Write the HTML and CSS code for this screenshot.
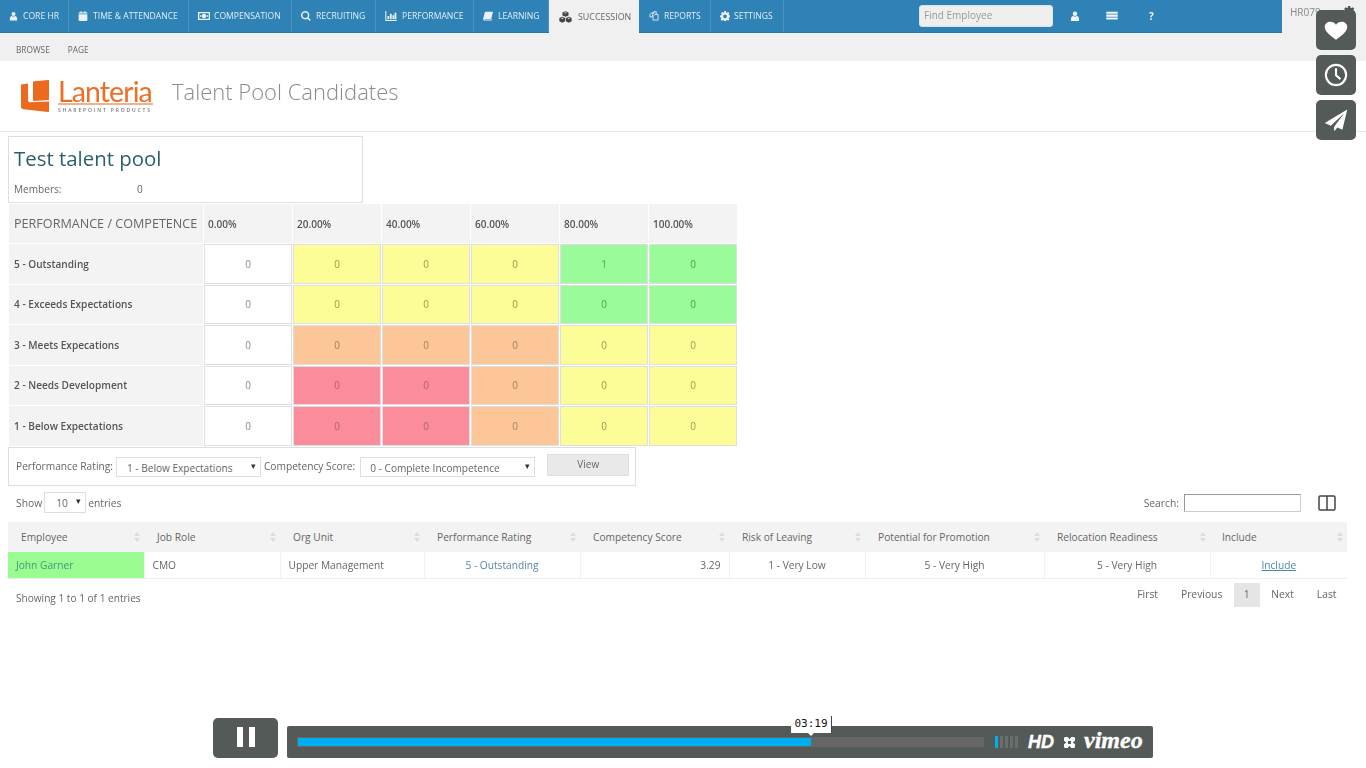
FILE: index.html
```html
<!DOCTYPE html>
<html lang="en">
<head>
<meta charset="utf-8">
<title>Talent Pool Candidates</title>
<link rel="stylesheet" href="styles.css">
</head>
<body>
<svg class="defs" width="0" height="0" aria-hidden="true">
  <symbol id="i-user" viewBox="0 0 16 16"><circle cx="8" cy="4.4" r="3.6"/><path d="M1.5 15v-2.6C1.5 9.8 3.4 8 5.2 8c.8.6 1.7.9 2.8.9s2-.3 2.8-.9c1.8 0 3.7 1.8 3.7 4.4V15c0 .5-.5 1-1 1h-11c-.5 0-1-.5-1-1z"/></symbol>
  <symbol id="i-cal" viewBox="0 0 16 16"><path d="M1 5h14v9.5c0 .8-.7 1.5-1.5 1.5h-11C1.700 16 1 15.300 1 14.500zM2.500 2H4V.5h2V2h4V.5h2V2h1.500c.8 0 1.500.7 1.500 1.500V4H1v-.5C1 2.700 1.700 2 2.500 2z"/></symbol>
  <symbol id="i-money" viewBox="0 0 18 14"><path fill-rule="evenodd" d="M0 1h18v12H0zM2 3v8h14V3zM9 3.500a3.500 3.500 0 1 1 0 7 3.500 3.500 0 0 1 0-7zM3 6h2v2H3zM13 6h2v2h-2z"/></symbol>
  <symbol id="i-search" viewBox="0 0 16 16"><path fill-rule="evenodd" d="M6.700 0a6.700 6.700 0 0 1 5.400 10.600l3.500 3.500-1.700 1.700-3.500-3.500A6.700 6.700 0 1 1 6.700 0zm0 2.400a4.300 4.300 0 1 0 0 8.600 4.300 4.300 0 0 0 0-8.600z"/></symbol>
  <symbol id="i-chart" viewBox="0 0 16 14"><path d="M0 0h1.500v12.500H16V14H0zM3 7h2.500v4.500H3zM6.500 4H9v7.500H6.500zM10 6h2.500v5.500H10zM13 2.500h2.500v9H13z"/></symbol>
  <symbol id="i-book" viewBox="0 0 16 14"><path d="M4.500 0H15c.7 0 1 .5.800 1.200l-2.300 9.300c-.2.800-.8 1.200-1.500 1.200H3c-.7 0-1 .8-.2.8h10.500c.5 0 .8-.3 1-.8l.5.500c-.2.8-.8 1.800-1.800 1.800H2C.6 14 0 12.800 .3 11.500L2.800 1.300C3 .5 3.700 0 4.500 0z"/></symbol>
  <symbol id="i-cubes" viewBox="0 0 18 16"><path fill-rule="evenodd" d="M9 0l4.200 1.700v4.200L9 7.600 4.800 5.900V1.700zM9 1.500 7 2.300 9 3.100l2-.8zM4.500 7.700l4 1.700v4.500l-4 1.900-4-1.900V9.400zM4.500 9.100l-2 .8 2 .8 2-.8zM13.500 7.700l4 1.700v4.500l-4 1.900-4-1.900V9.400zM13.500 9.100l-2 .8 2 .8 2-.8z"/></symbol>
  <symbol id="i-copy" viewBox="0 0 16 16"><path fill="none" stroke="currentColor" stroke-width="1.400" d="M5.500 3.500 8 1h3.500v4M8 1v3H5.500v5.500h-4V5.500L5.500 1.500M9.500 5.500h5v9h-8V9z"/></symbol>
  <symbol id="i-cog" viewBox="0 0 16 16"><path fill-rule="evenodd" d="M6.500 0h3l.4 2.200 1.300.6L13 1.500l2 2.100-1.200 1.800.6 1.300 2.200.4v2.900l-2.200.4-.6 1.300 1.300 1.800-2.100 2.100-1.800-1.300-1.300.5-.4 2.200h-3l-.4-2.200-1.300-.5-1.800 1.300-2.100-2.100 1.300-1.800-.6-1.300L0 9.900V7l2.200-.4.600-1.300L1.500 3.500l2.100-2 1.800 1.300 1.300-.6zM8 5.400a3 3 0 1 0 0 6 3 3 0 0 0 0-6z"/></symbol>
  <symbol id="i-list" viewBox="0 0 16 14"><path d="M0 1h16v3H0zM0 5h16v3H0zM0 9h16v3H0z"/></symbol>
</svg>

<header class="topbar">
  <nav class="tabs">
    <a class="tab"><svg class="ico ico-s"><use href="#i-user"/></svg>CORE HR</a>
    <a class="tab"><svg class="ico"><use href="#i-cal"/></svg>TIME &amp; ATTENDANCE</a>
    <a class="tab tab-tight"><svg class="ico ico-w"><use href="#i-money"/></svg>COMPENSATION</a>
    <a class="tab"><svg class="ico"><use href="#i-search"/></svg>RECRUITING</a>
    <a class="tab"><svg class="ico ico-w"><use href="#i-chart"/></svg>PERFORMANCE</a>
    <a class="tab"><svg class="ico"><use href="#i-book"/></svg>LEARNING</a>
    <a class="tab tab-active"><svg class="ico ico-c"><use href="#i-cubes"/></svg>SUCCESSION</a>
    <a class="tab tab-tight"><svg class="ico ico-w"><use href="#i-copy"/></svg>REPORTS</a>
    <a class="tab tab-tight"><svg class="ico"><use href="#i-cog"/></svg>SETTINGS</a>
    <div class="tab-tools">
      <div class="find">Find Employee</div>
      <svg class="tool tool-user"><use href="#i-user"/></svg>
      <svg class="tool tool-list"><use href="#i-list"/></svg>
      <span class="tool-q">?</span>
    </div>
  </nav>
  <div class="account">
    <span class="account-name">HR079 ▾</span>
    <svg class="account-cog"><use href="#i-cog"/></svg>
  </div>
</header>

<div class="subbar"><span>BROWSE</span><span>PAGE</span></div>

<div class="brandbar">
  <div class="logo">
    <svg class="logo-mark" viewBox="0 0 28 32"><path d="M0 4.500 7 3.500V20c0 1.500.8 2.300 2.200 2.200L28 21.500V31c0 .7-.5 1-1.200 1L2.500 29.300C1 29.100 0 28 0 26.500z"/><path d="M12 1.500 27 0c.7 0 1 .3 1 1V20L13 21c-.7 0-1-.3-1-1z"/></svg>
    <div class="logo-words">
      <span class="logo-name">Lanteria</span>
      <span class="logo-sub">SHAREPOINT PRODUCTS</span>
    </div>
  </div>
  <h1 class="page-title">Talent Pool Candidates</h1>
</div>

<main class="content">
  <section class="pool">
    <h2 class="pool-name">Test talent pool</h2>
    <div class="pool-meta"><span class="pool-label">Members:</span><span>0</span></div>
  </section>

  <section class="matrix">
    <div class="m-corner">PERFORMANCE / COMPETENCE</div>
    <div class="m-head">0.00%</div><div class="m-head">20.00%</div><div class="m-head">40.00%</div><div class="m-head">60.00%</div><div class="m-head">80.00%</div><div class="m-head">100.00%</div>

    <div class="m-row">5 - Outstanding</div>
    <div class="c c-w">0</div><div class="c c-y">0</div><div class="c c-y">0</div><div class="c c-y">0</div><div class="c c-g">1</div><div class="c c-g">0</div>

    <div class="m-row">4 - Exceeds Expectations</div>
    <div class="c c-w">0</div><div class="c c-y">0</div><div class="c c-y">0</div><div class="c c-y">0</div><div class="c c-g">0</div><div class="c c-g">0</div>

    <div class="m-row">3 - Meets Expecations</div>
    <div class="c c-w">0</div><div class="c c-o">0</div><div class="c c-o">0</div><div class="c c-o">0</div><div class="c c-y">0</div><div class="c c-y">0</div>

    <div class="m-row">2 - Needs Development</div>
    <div class="c c-w">0</div><div class="c c-r">0</div><div class="c c-r">0</div><div class="c c-o">0</div><div class="c c-y">0</div><div class="c c-y">0</div>

    <div class="m-row">1 - Below Expectations</div>
    <div class="c c-w">0</div><div class="c c-r">0</div><div class="c c-r">0</div><div class="c c-o">0</div><div class="c c-y">0</div><div class="c c-y">0</div>
  </section>

  <section class="filter">
    <span class="f-label">Performance Rating:</span>
    <div class="select sel-perf"><span>1 - Below Expectations</span><i>▾</i></div>
    <span class="f-label">Competency Score:</span>
    <div class="select sel-comp"><span>0 - Complete Incompetence</span><i>▾</i></div>
    <div class="view-btn">View</div>
  </section>

  <section class="tools">
    <div class="show">Show <div class="select sel-len"><span>10</span><i>▾</i></div> entries</div>
    <div class="search">Search: <div class="search-box"></div>
      <svg class="columns-ico" viewBox="0 0 18 16"><path fill="none" stroke="#444" stroke-width="1.500" d="M1 2.200c0-.7.500-1.200 1.200-1.200h13.600c.7 0 1.200.5 1.200 1.200v11.600c0 .7-.5 1.200-1.200 1.200H2.200c-.7 0-1.200-.5-1.200-1.200zM9 1v14"/></svg>
    </div>
  </section>

  <table class="grid">
    <colgroup><col class="w1"><col class="w2"><col class="w3"><col class="w4"><col class="w5"><col class="w6"><col class="w7"><col class="w8"><col class="w9"></colgroup>
    <thead>
      <tr>
        <th>Employee</th><th>Job Role</th><th>Org Unit</th><th>Performance Rating</th><th>Competency Score</th><th>Risk of Leaving</th><th>Potential for Promotion</th><th>Relocation Readiness</th><th>Include</th>
      </tr>
    </thead>
    <tbody>
      <tr>
        <td class="td-emp">John Garner</td>
        <td>CMO</td>
        <td>Upper Management</td>
        <td class="ctr td-link">5 - Outstanding</td>
        <td class="rgt">3.29</td>
        <td class="ctr">1 - Very Low</td>
        <td class="ctr">5 - Very High</td>
        <td class="ctr">5 - Very High</td>
        <td class="ctr"><a class="inc">Include</a></td>
      </tr>
    </tbody>
  </table>

  <section class="foot">
    <div class="info">Showing 1 to 1 of 1 entries</div>
    <div class="pager"><span>First</span><span>Previous</span><span class="pg-on">1</span><span>Next</span><span>Last</span></div>
  </section>
</main>

<aside class="float-btns">
  <div class="fb"><svg viewBox="0 0 32 28" preserveAspectRatio="none" class="fb-ico fb-heart"><path d="M16 27.500C12 24 1 16.500 1 8.700 1 4 4.500 1 8.500 1c3.200 0 6 1.600 7.500 4.500C17.500 2.600 20.300 1 23.500 1 27.500 1 31 4 31 8.700c0 7.800-11 15.300-15 18.800z"/></svg></div>
  <div class="fb"><svg viewBox="0 0 32 32" class="fb-ico fb-clock"><circle cx="16" cy="16" r="13.500"/><path d="M16 7v9.500l6 5"/></svg></div>
  <div class="fb"><svg viewBox="0 0 32 32" class="fb-ico"><path d="M31 2 1 20l8 3.500L27 7 13.500 25v6l4.500-5 6.500 3z"/></svg></div>
</aside>

<aside class="player">
  <div class="pause"><i></i><i></i></div>
  <div class="bar">
    <div class="track"><div class="fill"></div></div>
    <div class="vol"><i class="on"></i><i></i><i></i><i></i><i></i></div>
    <span class="hd">HD</span>
    <svg class="fs" viewBox="0 0 12 12"><path d="M0 1 1 0h3l2 2.500L8 0h3l1 1v3L9.500 6 12 8v3l-1 1H8L6 9.500 4 12H1l-1-1V8l2.500-2L0 4zM4.300 4.300v3.400h3.400V4.300z"/></svg>
    <span class="vm">vimeo</span>
    <div class="stamp">03:19</div>
  </div>
</aside>
</body>
</html>
```
FILE: styles.css
```css
* { box-sizing: border-box; }
html, body { margin: 0; padding: 0; }
body {
  position: relative;
  width: 1366px;
  height: 768px;
  overflow: hidden;
  background: #fff;
  font-family: "Open Sans", "Liberation Sans", sans-serif;
  font-size: 10.3px;
  color: #666;
}
.defs { position: absolute; }

/* the reference is a frame of a video: soft edges everywhere except the player chrome */
.topbar, .subbar, .brandbar, .content { filter: blur(.35px); }

/* top bar */
.topbar { display: flex; height: 33px; background: #f0f0f0; }
.tabs {
  display: grid;
  grid-template-columns: 69px 120px 103px 84px 98px 75px 90px 72px 73px 1fr;
  width: 1282px;
  background: #2f82b6;
  border-bottom: 1px solid #2a75a5;
}
.tab {
  display: flex;
  align-items: center;
  padding-left: 9px;
  gap: 5px;
  font-size: 8.6px;
  color: #e4eef5;
  border-right: 1px solid #4a93c0;
  white-space: nowrap;
}
.tab-tight { gap: 4px; }
.tab-active {
  background: #f0f0f0;
  color: #666;
  border-right: 0;
  margin-bottom: -1px;
  padding-left: 10px;
  gap: 6px;
  font-size: 8.9px;
}
.ico { width: 10px; height: 10px; flex: none; fill: #e9f1f7; color: #e9f1f7; }
.ico-s { width: 9px; }
.ico-w { width: 12px; }
.ico-c { width: 13px; height: 12px; fill: #444; }
.tab-tools { display: flex; align-items: center; }
.find {
  width: 134px;
  height: 22px;
  margin: 0 0 0 135px;
  padding: 2px 4px;
  background: #efefef;
  border-radius: 3px;
  border: 1px solid #d8e2e8;
  font-size: 10px;
  line-height: 14px;
  color: #999;
}
.tool { fill: #f1f6fa; flex: none; }
.tool-user { width: 10px; height: 10px; margin-left: 17px; }
.tool-list { width: 12px; height: 10px; margin-left: 26px; }
.tool-q { margin-left: 31px; font-size: 10px; font-weight: 700; color: #f1f6fa; }
.account { flex: 1; display: flex; padding: 5px 0 0 8px; font-size: 10px; color: #888; }
.account-name { width: 53px; line-height: 14px; white-space: nowrap; }
.account-cog { width: 12px; height: 12px; fill: #555; margin-top: 1px; }

.subbar {
  display: flex;
  gap: 18px;
  height: 27.5px;
  padding: 6px 0 0 16px;
  align-items: center;
  background: #f0f0f0;
  font-size: 8.3px;
  color: #666;
}

/* brand */
.brandbar {
  display: flex;
  align-items: center;
  height: 71.5px;
  padding-left: 21px;
  border-bottom: 1px solid #e8e8e8;
}
.logo { display: flex; gap: 9px; align-items: flex-start; width: 151px; height: 36px; margin-top: 3px; }
.logo-mark { width: 28px; height: 32px; fill: #ec6a1e; margin-top: 1px; flex: none; }
.logo-words { display: flex; flex-direction: column; }
.logo-name {
  font-family: "Lato", "Open Sans", sans-serif;
  font-weight: 400;
  font-size: 28.5px;
  line-height: 25px;
  color: #ec6f26;
  border-bottom: 2px solid #f3b08a;
  letter-spacing: -.9px;
  height: 26px;
  width: 95px;
}
.logo-sub { font-size: 5px; font-weight: 600; line-height: 7px; letter-spacing: 1.85px; color: #777; white-space: nowrap; margin-top: 2px; }
.page-title {
  margin: -10px 0 0;
  font-weight: 300;
  font-size: 22px;
  line-height: 30px;
  color: #8a8a8a;
}

/* content */
.content { padding: 4px 19px 0 8px; }
.pool {
  width: 355px;
  height: 67px;
  padding: 7px 5px;
  border: 1px solid #dedede;
}
.pool-name { margin: 0; font-size: 20.4px; font-weight: 400; line-height: 28px; color: #2c5f6d; }
.pool-meta { display: flex; margin-top: 10px; font-size: 10.1px; line-height: 14px; }
.pool-label { width: 123px; }

.matrix {
  display: grid;
  grid-template-columns: 194px repeat(6, 88px);
  grid-template-rows: 39px repeat(5, 39.5px);
  gap: 1px;
  margin: 1px 0 0 1px;
  width: max-content;
}
.m-corner, .m-head, .m-row { background: #f3f3f3; display: flex; align-items: center; padding-left: 5px; }
.m-corner { font-size: 12.6px; color: #666; white-space: nowrap; }
.m-head { padding-left: 4px; font-weight: 600; font-size: 10px; color: #555; }
.m-row { font-weight: 600; font-size: 10.1px; color: #555; }
.c { display: flex; align-items: center; justify-content: center; font-size: 10px; color: #888; border: 1px solid #dfdfdf; }
.c-w { background: #fff; }
.c-y { background: #fdfd98; color: #9a9a50; }
.c-g { background: #99fb99; color: #5a9a5a; }
.c-o { background: #fcc699; color: #a08060; }
.c-r { background: #fa8c9b; color: #a86570; }

.filter {
  display: flex;
  align-items: center;
  width: 628px;
  height: 39px;
  margin-top: 1.5px;
  padding-left: 7px;
  border: 1px solid #dedede;
  font-size: 10.2px;
  white-space: nowrap;
}
.f-label { line-height: 14px; margin-top: -2px; }
.select {
  position: relative;
  height: 20px;
  border: 1px solid #dedede;
  font-size: 10.1px;
  line-height: 20px;
  padding-left: 10px;
  color: #666;
  background: #fff;
}
.select i {
  position: absolute;
  right: 4px;
  top: -2px;
  font-style: normal;
  font-size: 9px;
  color: #333;
}
.sel-perf { width: 145px; margin: 0 3px; }
.sel-comp { width: 175px; margin-left: 5px; padding-left: 9px; }
.view-btn {
  width: 82px;
  height: 22px;
  margin: -3px 0 0 12px;
  background: #e9e9e9;
  border: 1px solid #dfdfdf;
  text-align: center;
  line-height: 19px;
  font-size: 10px;
  color: #666;
}

.tools {
  display: flex;
  justify-content: space-between;
  align-items: center;
  height: 36px;
  padding: 0 11px 3px 8px;
}
.show { display: flex; align-items: center; gap: 2px; }
.sel-len { width: 42px; height: 21px; padding-left: 11px; }
.search { display: flex; align-items: center; gap: 5px; }
.search-box {
  width: 117px;
  height: 18px;
  border: 1px solid #ccc;
  border-top-color: #999;
  border-left-color: #999;
}
.columns-ico { width: 18px; height: 16px; margin-left: 12px; }

.grid {
  width: 1339px;
  table-layout: fixed;
  border-collapse: collapse;
  font-size: 10.2px;
}
.w1, .w2 { width: 136px; }
.w3 { width: 144px; }
.w4 { width: 156px; }
.w5 { width: 149px; }
.w6 { width: 136px; }
.w7 { width: 179px; }
.w8 { width: 166px; }
.w9 { width: 137px; }
.grid th {
  position: relative;
  height: 30px;
  padding: 0 0 0 13px;
  background: #f3f3f3;
  font-weight: 400;
  text-align: left;
  color: #666;
}
.grid th:last-child { padding-left: 12px; }
.grid th::after {
  content: "";
  position: absolute;
  right: 4px;
  top: 10px;
  width: 0;
  height: 0;
  border-left: 3px solid transparent;
  border-right: 3px solid transparent;
  border-bottom: 4px solid #dcdcdc;
}
.grid th::before {
  content: "";
  position: absolute;
  right: 4px;
  top: 16px;
  width: 0;
  height: 0;
  border-left: 3px solid transparent;
  border-right: 3px solid transparent;
  border-top: 4px solid #dcdcdc;
}
.grid td {
  height: 26px;
  padding: 0 8px;
  border-right: 1px solid #f2f2f2;
  border-bottom: 1px solid #eee;
  color: #666;
  white-space: nowrap;
}
.grid td:last-child { border-right: 0; }
.grid .td-emp { background: #99fb90; color: #3f9a80; }
.grid .td-link { color: #5a84a8; }
.ctr { text-align: center; }
.rgt { text-align: right; }
.inc { color: #4a86ac; text-decoration: underline; }

.foot {
  display: flex;
  justify-content: space-between;
  padding: 4px 0 0 8px;
  width: 1340px;
}
.info { padding-top: 8px; line-height: 14px; font-size: 10.1px; }
.pager { display: flex; align-items: flex-start; line-height: 14px; }
.pager span { height: 24px; padding: 4px 11.5px; }
.pager .pg-on { background: #e5e5e5; padding: 4px 10px; }

/* floating side buttons */
.float-btns {
  position: absolute;
  top: 10px;
  left: 1316px;
  display: flex;
  flex-direction: column;
  gap: 5px;
}
.fb {
  display: flex;
  align-items: center;
  justify-content: center;
  width: 40px;
  height: 40px;
  border-radius: 5px;
  background: #535a58;
}
.fb-ico { width: 24px; height: 24px; fill: #fff; }
.fb-heart { height: 19px; }
.fb-clock { fill: none; stroke: #fff; stroke-width: 2.8; }

/* video controls */
.player {
  position: absolute;
  left: 213px;
  top: 718px;
  display: flex;
  align-items: flex-end;
  gap: 9px;
  color: #fff;
}
.pause {
  display: flex;
  justify-content: center;
  gap: 6px;
  width: 65px;
  height: 40px;
  padding: 9px 0 0 1px;
  border-radius: 5px;
  background: #535a58;
}
.pause i { width: 6px; height: 20px; background: #fff; }
.bar {
  position: relative;
  display: flex;
  align-items: center;
  width: 866px;
  height: 32px;
  padding-left: 10px;
  border-radius: 2px;
  background: #535a58;
}
.track {
  width: 687px;
  height: 10px;
  margin-top: -1px;
  border: 1px solid #636866;
  background: #666;
}
.fill { width: 513px; height: 100%; background: #00adef; }
.vol { display: flex; gap: 2px; margin-left: 11px; height: 12px; }
.vol i { width: 3px; background: #6a6f6d; }
.vol .on { background: #00adef; }
.hd { margin-left: 10px; font: italic 700 18px/20px "Liberation Sans", sans-serif; -webkit-text-stroke: .4px #fff; }
.fs { width: 11px; height: 11px; margin-left: 10px; fill: #fff; }
.vm { margin-left: 9px; font: italic 700 24px/22px "Liberation Serif", serif; margin-top: -5px; -webkit-text-stroke: .4px #fff; }
.stamp {
  position: absolute;
  left: 504px;
  top: -10px;
  width: 41px;
  height: 17px;
  background: #fff;
  border-right: 1px solid #444;
  color: #111;
  text-align: center;
  font: 11px/16px "DejaVu Sans Mono", monospace;
}
.stamp::after {
  content: "";
  position: absolute;
  left: 16px;
  top: 16px;
  border-left: 4px solid transparent;
  border-right: 4px solid transparent;
  border-top: 4px solid #fff;
}
```
